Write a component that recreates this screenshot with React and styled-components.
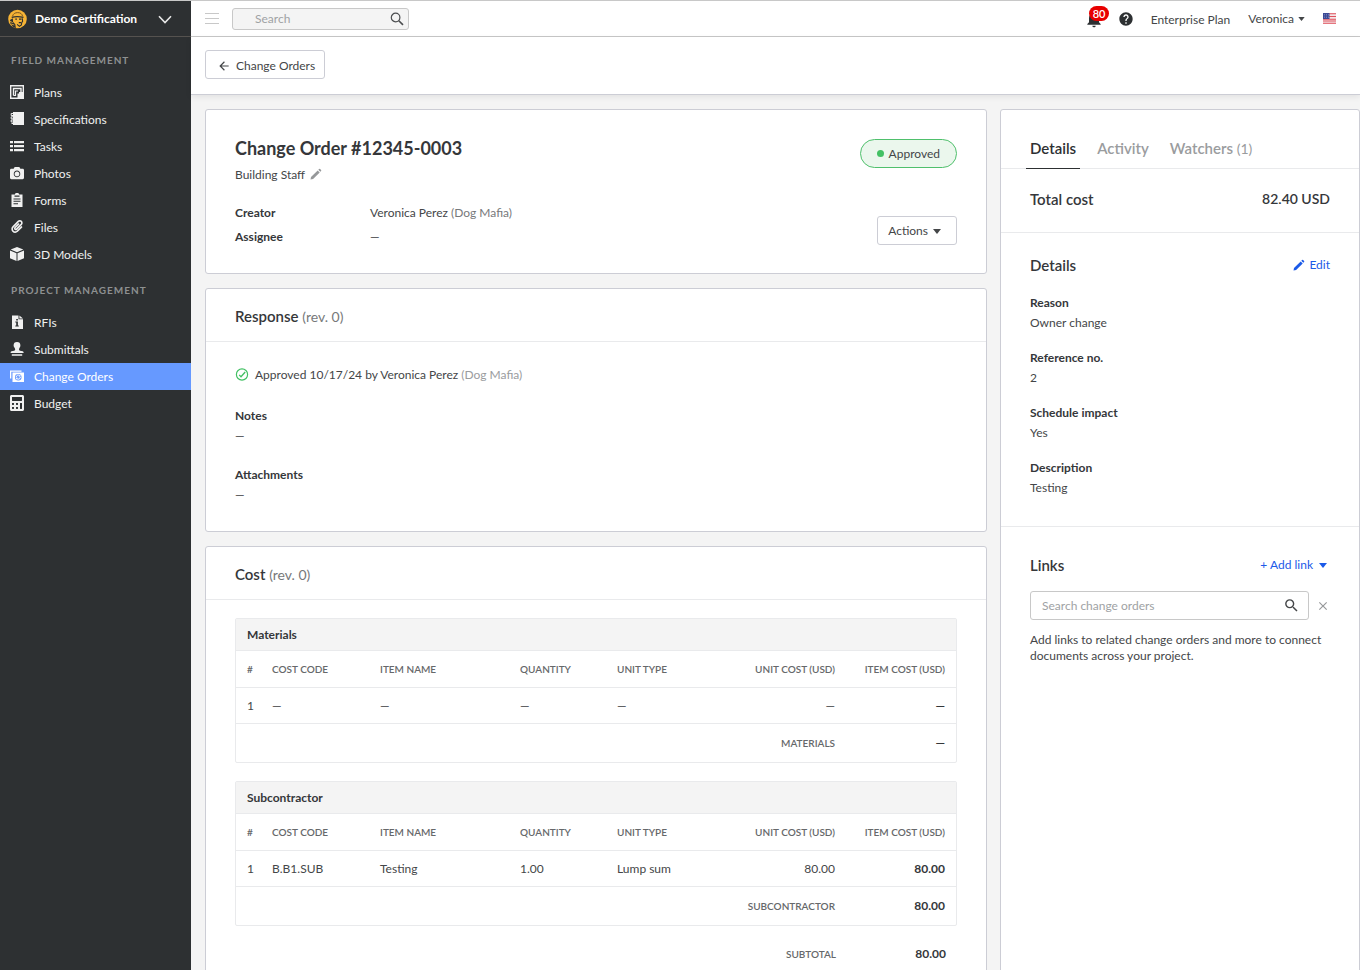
import React from "react";
import styled, { createGlobalStyle } from "styled-components";
import { MdArrowBack, MdClose, MdHelp, MdNotifications, MdSearch } from "react-icons/md";
import { FaCalculator, FaCamera, FaPaperclip } from "react-icons/fa";

const Global = createGlobalStyle`
  *, *::before, *::after { box-sizing: border-box; }
  body {
    margin: 0;
    font-family: Lato, "Liberation Sans", sans-serif;
    font-size: 12px;
    line-height: 20px;
    color: #444648;
    background: #f4f4f4;
  }
  button, input { font: inherit; color: inherit; }
  button { cursor: pointer; }
  h1, h2, h3, p, dl, dd, ul { margin: 0; padding: 0; }
  svg { display: block; flex: none; }
`;

const Shell = styled.div`
  display: flex;
  height: 100vh;
  overflow: hidden;
`;

const Sidebar = styled.nav`
  flex: none;
  width: 191px;
  background: #2d3032;
  color: #f0f0f0;
  overflow: hidden;
`;

const ProjectSwitch = styled.button`
  display: flex;
  align-items: center;
  width: 100%;
  height: 37px;
  margin-bottom: 1px;
  padding: 1px 19px 0 8px;
  gap: 8px;
  border: 0;
  border-top: 1px solid #c8c8c8;
  border-bottom: 1px solid #55524f;
  background: none;
  color: #fff;
  font-weight: 700;
  text-align: left;
`;

const ProjectName = styled.span`
  flex: 1;
`;

const NavHeading = styled.h2`
  height: 41px;
  padding: 12px 11px 0;
  font-size: 10px;
  font-weight: 700;
  letter-spacing: 1px;
  color: #8e9091;
`;

const NavList = styled.ul`
  list-style: none;
`;

const NavLink = styled.a`
  display: flex;
  align-items: center;
  gap: 10px;
  height: 27px;
  padding: 0 10px;
  color: ${(p) => (p.$active ? "#fff" : "#f0f0f0")};
  background: ${(p) => (p.$active ? "#6699ff" : "transparent")};
  text-decoration: none;

  svg {
    width: 14px;
    margin-bottom: 2px;
  }
`;

const Main = styled.div`
  flex: 1;
  min-width: 0;
  display: flex;
  flex-direction: column;
`;

const TopBar = styled.header`
  flex: none;
  display: flex;
  align-items: center;
  height: 37px;
  padding: 0 24px 0 14px;
  border-top: 1px solid #c8c8c8;
  border-bottom: 1px solid #c8c8c8;
  background: #fff;
`;

const IconButton = styled.button`
  display: flex;
  align-items: center;
  padding: 0;
  border: 0;
  background: none;
  color: ${(p) => p.$color || "#2d3032"};
`;

const SearchBox = styled.label`
  display: flex;
  align-items: center;
  border: 1px solid #c8c8c8;
  border-radius: 3px;
`;

const TopSearch = styled(SearchBox)`
  width: 177px;
  height: 22px;
  margin-left: 13px;
  padding: 0 4px 0 22px;
  background: #f4f4f4;
`;

const LinkSearch = styled(SearchBox)`
  flex: 1;
  min-width: 0;
  height: 29px;
  padding: 0 8px 0 11px;
`;

const SearchInput = styled.input`
  flex: 1;
  min-width: 0;
  padding: 0;
  border: 0;
  outline: 0;
  background: none;
  &::placeholder { color: #a0a2a4; opacity: 1; }
`;

const TopActions = styled.div`
  display: flex;
  align-items: center;
  margin-left: auto;
`;

const Notifications = styled(IconButton)`
  position: relative;
  margin-right: 14px;
`;

const Count = styled.span`
  position: absolute;
  left: 5px;
  top: -3px;
  height: 15px;
  padding: 0 4px;
  border-radius: 8px;
  background: #e80000;
  color: #fff;
  font-size: 11px;
  font-weight: 600;
  line-height: 15px;
`;

const PlanLink = styled.a`
  margin: 2px 18px 0 17px;
  color: inherit;
  text-decoration: none;
`;

const UserMenu = styled.button`
  display: flex;
  align-items: center;
  gap: 4px;
  margin-right: 18px;
  padding: 0;
  border: 0;
  background: none;
`;

const SubBar = styled.div`
  flex: none;
  position: relative;
  padding: 13px 14px 15px;
  border-bottom: 1px solid #cccdd5;
  background: #fff;
  box-shadow: 0 2px 6px rgba(0, 0, 0, 0.08);
`;

const OutlineButton = styled.button`
  display: inline-flex;
  align-items: center;
  height: 29px;
  padding: ${(p) => p.$pad};
  gap: 5px;
  border: 1px solid #cccdd5;
  border-radius: 3px;
  background: #fff;
  vertical-align: top;
`;

const Content = styled.main`
  flex: 1;
  min-height: 0;
  overflow-y: auto;
  scrollbar-width: none;
`;

const ContentRow = styled.div`
  display: flex;
  align-items: stretch;
  gap: 13px;
  min-height: 100%;
  padding: 14px 0 14px 14px;
`;

const Column = styled.div`
  flex: 1;
  min-width: 0;
  display: flex;
  flex-direction: column;
  gap: 14px;
`;

const Card = styled.section`
  border: 1px solid #cccdd5;
  border-radius: 3px;
  background: #fff;
`;

const SummaryCard = styled(Card)`
  display: flex;
  justify-content: space-between;
  padding: 26px 29px 24px;
`;

const Title = styled.h1`
  font-size: 18px;
  line-height: 24px;
  font-weight: 700;
  color: #35373a;
`;

const Subtitle = styled.p`
  display: flex;
  align-items: center;
  gap: 4px;
  margin: 5px 0 16px;

  svg { margin-bottom: 2px; }
`;

const People = styled.dl`
  display: grid;
  grid-template-columns: 135px auto;
  line-height: 24px;
`;

const Term = styled.dt`
  font-weight: 700;
  color: #35373a;
`;

const Muted = styled.span`
  color: ${(p) => (p.$light ? "#9a9c9e" : "#77797b")};
  font-weight: 400;
`;

const Revision = styled(Muted)`
  font-size: 14px;
`;

const SummarySide = styled.div`
  display: flex;
  flex-direction: column;
  align-items: flex-end;
  gap: 48px;
  padding-top: 3px;
`;

const Badge = styled.span`
  display: flex;
  align-items: center;
  gap: 5px;
  height: 29px;
  padding: 0 16px;
  border: 1px solid #4fc06c;
  border-radius: 15px;
  background: #ebf7ed;
`;

const Dot = styled.span`
  width: 7px;
  height: 7px;
  border-radius: 50%;
  background: #43c164;
`;

const CardHeader = styled.header`
  display: flex;
  align-items: center;
  height: 53px;
  padding: 2px 29px 0;
  border-bottom: 1px solid #e9eaec;
`;

const Heading = styled.h2`
  font-size: 15px;
  line-height: 20px;
  font-weight: 600;
  color: #35373a;
`;

const ResponseBody = styled.div`
  padding: 23px 29px 26px;
`;

const Approval = styled.p`
  display: flex;
  align-items: center;
  gap: 6px;
  margin-bottom: 21px;
`;

const FieldList = styled.dl`
  display: flex;
  flex-direction: column;
  gap: ${(p) => p.$gap}px;
`;

const CostBody = styled.div`
  display: flex;
  flex-direction: column;
  gap: 18px;
  padding: 18px 29px 29px;
`;

const TableFrame = styled.div`
  border: 1px solid #e9eaec;
  border-radius: 2px;
`;

const Table = styled.table`
  width: 100%;
  table-layout: fixed;
  border-collapse: separate;
  border-spacing: 0;
`;

const Caption = styled.caption`
  height: 32px;
  padding: 6px 11px 5px;
  border-bottom: 1px solid #e9eaec;
  background: #f4f4f4;
  color: #35373a;
  font-weight: 700;
  text-align: left;
`;

const Col = styled.col`
  width: ${(p) => p.$w}px;
`;

const HeadCell = styled.th`
  height: 37px;
  padding: 0 11px;
  border-bottom: 1px solid #e9eaec;
  font-size: 10px;
  font-weight: 600;
  color: #66686a;
  text-align: ${(p) => (p.$right ? "right" : "left")};
  white-space: nowrap;
`;

const Cell = styled.td`
  height: 36px;
  padding: 0 11px;
  border-bottom: 1px solid #e9eaec;
  text-align: ${(p) => (p.$right ? "right" : "left")};
  font-weight: ${(p) => (p.$bold ? 700 : 400)};
  color: ${(p) => (p.$bold ? "#35373a" : "inherit")};
`;

const FootLabel = styled(HeadCell)`
  height: 38px;
  border: 0;
`;

const FootCell = styled(Cell)`
  height: 38px;
  border: 0;
`;

const Totals = styled.dl`
  display: grid;
  grid-template-columns: 1fr 110px;
  padding-right: 11px;
  text-align: right;
`;

const TotalLabel = styled.dt`
  font-size: 10px;
  font-weight: 600;
  color: #66686a;
`;

const TotalValue = styled.dd`
  font-weight: 700;
  color: #35373a;
`;

const Panel = styled.aside`
  flex: none;
  width: 360px;
  border: 1px solid #cccdd5;
  border-radius: 3px;
  background: #fff;
`;

const Tabs = styled.div`
  display: flex;
  gap: 13px;
  height: 59px;
  padding: 18px 25px 0;
  border-bottom: 1px solid #e9eaec;
`;

const Tab = styled.button`
  height: 41px;
  padding: 0 4px;
  border: 0;
  border-bottom: 1px solid ${(p) => (p.$active ? "#2d3032" : "transparent")};
  background: none;
  font-size: 15px;
  font-weight: 600;
  color: ${(p) => (p.$active ? "#2d3032" : "#9a9c9e")};
`;

const TabCount = styled.span`
  font-size: 14px;
  font-weight: 400;
`;

const PanelSection = styled.section`
  padding: ${(p) => p.$pad};
  border-bottom: ${(p) => (p.$last ? "0" : "1px solid #e9eaec")};
`;

const PanelRow = styled.div`
  display: flex;
  align-items: center;
  justify-content: space-between;
  margin-bottom: ${(p) => p.$mb || 0}px;
`;

const TotalAmount = styled.strong`
  font-size: 14px;
  font-weight: 600;
  color: #35373a;
`;

const TextButton = styled.button`
  display: flex;
  align-items: center;
  gap: ${(p) => p.$gap}px;
  padding: 0 ${(p) => p.$end || 0}px 0 0;
  border: 0;
  background: none;
  color: #1b5ae8;
`;

const LinkRow = styled.div`
  display: flex;
  align-items: center;
  gap: 7px;
  margin-bottom: 12px;
`;

const Hint = styled.p`
  line-height: 16px;
`;

const Caret = ({ w = 8, h = 5 }) => (
  <svg width={w} height={h} viewBox="0 0 8 5" fill="currentColor" aria-hidden="true">
    <path d="M0 0h8L4 5z" />
  </svg>
);

const Icon14 = ({ children, size = 14 }) => (
  <svg width={size} height={size} viewBox="0 0 14 14" fill="currentColor" aria-hidden="true">
    {children}
  </svg>
);

const PlansIcon = () => (
  <Icon14>
    <path d="M.7 .7h12.600v12.600H.7z" fill="none" stroke="currentColor" strokeWidth="1.400" />
    <path d="M3.500 10.500V3.500h7.500v3.500" fill="none" stroke="currentColor" strokeWidth="1.400" />
    <path d="M3.500 10.500h2V6h2.500" fill="none" stroke="currentColor" strokeWidth="1.200" />
    <path d="M7.500 8.500H9V7h4v6H7.500z" />
  </Icon14>
);

const SpecsIcon = () => (
  <Icon14>
    <path d="M3 0h11v13H3z" />
    <path d="M4 1.500H1.200v2H4M4 4.800H1.200v2H4M4 8H1.200v2H4M4 11.500H1.500" fill="none" stroke="currentColor" strokeWidth="1" />
  </Icon14>
);

const TasksIcon = () => (
  <Icon14>
    <path d="M0 2h3v2.200H0zM4 2h10v2.200H4zM0 6h3v2.200H0zM4 6h10v2.200H4zM0 10h3v2.200H0zM4 10h10v2.200H4z" />
  </Icon14>
);

const FormsIcon = () => (
  <Icon14>
    <path fillRule="evenodd" d="M1.500 1.500H5V.8L6 0h2l1 .8v.7h3.500V14h-11zM4.500 2.500v1.200h5V2.500zM3.500 5.400v1h7v-1zm0 2.400v1h7v-1zm0 2.400v1H8v-1z" />
  </Icon14>
);

const CubeIcon = () => (
  <Icon14>
    <path d="M7 0l6.300 2.600L7 5.200.7 2.600zM0 3.500l6.500 2.700V14L0 11.200zM14 3.500L7.500 6.200V14l6.500-2.800z" />
  </Icon14>
);

const RfiIcon = () => (
  <Icon14>
    <path fillRule="evenodd" d="M2 .5h6.500V4.200H13V14H2zM9.400 .5l3.600 2.900H9.400zM6.200 4v1.500h1.700V4zM5.300 6.500v1h.9v3h-.9v1h3.500v-1H7.900v-4z" />
  </Icon14>
);

const StampIcon = () => (
  <Icon14>
    <path d="M7 0a3.400 3.400 0 0 1 3.400 3.400c0 1.800-1.400 2.300-1.400 4.100 0 .7.400 1.100 1 1.200l2.700.5q.9.300.9 1.300v.6H.6v-.6q0-1 .9-1.300l2.700-.5c.6-.1 1-.5 1-1.200 0-1.800-1.600-2.300-1.600-4.100A3.400 3.400 0 0 1 7 0zM1.800 12.200h10.400V13.800H1.800z" />
  </Icon14>
);

const OrdersIcon = () => (
  <Icon14>
    <path d="M0 1.500h11.500v1.200H1.300V9.500H0z" />
    <path fillRule="evenodd" d="M2.500 3.500H14V13H2.500zM8.200 4.900a3.300 3.300 0 1 0 .1 6.600 3.300 3.300 0 0 0-.1-6.600z" />
    <path d="M6.200 8.300A2 2 0 0 1 9.600 6.700M10.300 8A2 2 0 0 1 6.900 9.600" fill="none" stroke="currentColor" strokeWidth="1" />
    <path d="M10.400 5.600v2H8.500zM6.100 10.700v-2H8z" />
  </Icon14>
);

const HardHatLogo = () => (
  <svg width="19" height="20" viewBox="0 0 19 20" aria-hidden="true">
    <circle cx="9.500" cy="10" r="9.300" fill="#f5b335" />
    <path d="M4.600 7.200C5 4.900 6.900 3.600 9.700 3.600s4.500 1.400 4.800 3.600" fill="none" stroke="#7a5722" strokeWidth="1" />
    <path d="M3.700 8.300q5.500-1.500 11.800.1" stroke="#2d3032" strokeWidth="1.300" fill="none" />
    <path d="M4.800 9.300l.3 3.600 2.200 2.300.6 4-2.400-.9-2.900-3.200L2 11z" fill="#2d3032" />
    <path d="M2 12.200l2.800 1.500M3 15l3.300 1" stroke="#f5b335" strokeWidth=".8" />
    <path d="M7.300 10.200h1.600M11 10.200h2.500M10.800 13.600h2.200" stroke="#2d3032" strokeWidth="1.200" />
    <path d="M14.300 9.300l.3 3-.9 1.300-.3 2.400-2 1.300-2.300-2" stroke="#2d3032" strokeWidth="1.100" fill="none" />
  </svg>
);

const ChevronDown = () => (
  <svg width="14" height="9" viewBox="0 0 14 9" aria-hidden="true">
    <path d="M1 1.200l6 6.300 6-6.300" fill="none" stroke="#e8e8e8" strokeWidth="1.600" />
  </svg>
);

const MenuLines = () => (
  <svg width="14" height="11" viewBox="0 0 14 11" aria-hidden="true">
    <path d="M0 .5h14M0 5.500h14M0 10.500h14" stroke="#c8c8c8" />
  </svg>
);

const ThinSearch = () => (
  <svg width="14" height="14" viewBox="0 0 14 14" fill="none" stroke="#4b4d4f" aria-hidden="true">
    <circle cx="5.600" cy="5.500" r="4.300" strokeWidth="1.200" />
    <path d="M8.800 8.700l4.200 4.200" strokeWidth="1.600" />
  </svg>
);

const Pencil = ({ size = 13 }) => (
  <svg width={size} height={size} viewBox="0 0 13 13" fill="currentColor" aria-hidden="true">
    <path d="M1.500 11.500l.5-2.600 6.700-6.500 2 2L4.100 11zM9.300 1.800l.8-.8q.5-.4 1 0l1 1q.4.500 0 1l-.8.8z" />
  </svg>
);

const Flag = () => (
  <svg width="13" height="11" viewBox="0 0 13 11" role="img" aria-label="United States">
    <path fill="#f4e6e8" d="M0 0h13v11H0z" />
    <path d="M0 .7h13M0 3.500h13M0 6.200h13M0 8h13M0 10.300h13" stroke="#e0525c" strokeWidth="1.100" />
    <path fill="#3c4a96" d="M0 0h6.500v6H0z" />
    <path d="M1 1.500h5M1 3h5M1 4.500h5" stroke="#8f98c8" strokeWidth=".6" strokeDasharray="1 1" />
  </svg>
);

const CheckCircle = () => (
  <svg width="14" height="14" viewBox="0 0 14 14" fill="none" stroke="#43c164" aria-hidden="true">
    <circle cx="7" cy="6.500" r="5.600" strokeWidth="1.200" />
    <path d="M4.200 6.900l1.800 1.900 4.200-4.800" strokeWidth="1.300" />
  </svg>
);

const fieldLinks = [
  ["Plans", PlansIcon],
  ["Specifications", SpecsIcon],
  ["Tasks", TasksIcon],
  ["Photos", () => <FaCamera size={14} />],
  ["Forms", FormsIcon],
  ["Files", () => <FaPaperclip size={13} />],
  ["3D Models", CubeIcon],
];

const projectLinks = [
  ["RFIs", RfiIcon],
  ["Submittals", StampIcon],
  ["Change Orders", OrdersIcon],
  ["Budget", () => <FaCalculator size={16} />],
];

const NavGroup = ({ title, links, active }) => (
  <>
    <NavHeading>{title}</NavHeading>
    <NavList>
      {links.map(([label, Icon]) => (
        <li key={label}>
          <NavLink href="#" $active={label === active}>
            <Icon />
            {label}
          </NavLink>
        </li>
      ))}
    </NavList>
  </>
);

const colWidths = [25, 108, 140, 97, 97, 143, 110];
const colNames = ["#", "COST CODE", "ITEM NAME", "QUANTITY", "UNIT TYPE", "UNIT COST (USD)", "ITEM COST (USD)"];

const CostTable = ({ title, row, total }) => (
  <TableFrame>
    <Table>
      <Caption>{title}</Caption>
      <colgroup>
        {colWidths.map((w, i) => (
          <Col key={i} $w={w} />
        ))}
      </colgroup>
      <thead>
        <tr>
          {colNames.map((name, i) => (
            <HeadCell key={name} scope="col" $right={i > 4}>{name}</HeadCell>
          ))}
        </tr>
      </thead>
      <tbody>
        <tr>
          {row.map((value, i) => (
            <Cell key={i} $right={i > 4} $bold={i === 6}>{value}</Cell>
          ))}
        </tr>
      </tbody>
      <tfoot>
        <tr>
          <FootLabel scope="row" colSpan={6} $right>{title.toUpperCase()}</FootLabel>
          <FootCell $right $bold>{total}</FootCell>
        </tr>
      </tfoot>
    </Table>
  </TableFrame>
);

const Field = ({ label, value }) => (
  <div>
    <Term>{label}</Term>
    <dd>{value}</dd>
  </div>
);

export default function App() {
  return (
    <>
      <Global />
      <Shell>
        <Sidebar>
          <ProjectSwitch>
            <HardHatLogo />
            <ProjectName>Demo Certification</ProjectName>
            <ChevronDown />
          </ProjectSwitch>
          <NavGroup title="FIELD MANAGEMENT" links={fieldLinks} />
          <NavGroup title="PROJECT MANAGEMENT" links={projectLinks} active="Change Orders" />
        </Sidebar>
        <Main>
          <TopBar>
            <IconButton aria-label="Toggle menu"><MenuLines /></IconButton>
            <TopSearch>
              <SearchInput type="text" placeholder="Search" aria-label="Search" />
              <ThinSearch />
            </TopSearch>
            <TopActions>
              <Notifications aria-label="Notifications">
                <MdNotifications size={20} />
                <Count>80</Count>
              </Notifications>
              <IconButton aria-label="Help"><MdHelp size={16} /></IconButton>
              <PlanLink href="#">Enterprise Plan</PlanLink>
              <UserMenu>Veronica <Caret w={7} h={4} /></UserMenu>
              <Flag />
            </TopActions>
          </TopBar>
          <SubBar>
            <OutlineButton $pad="2px 9px 0 11px"><MdArrowBack size={14} />Change Orders</OutlineButton>
          </SubBar>
          <Content>
            <ContentRow>
              <Column>
                <SummaryCard>
                  <div>
                    <Title>Change Order #12345-0003</Title>
                    <Subtitle>
                      Building Staff
                      <IconButton aria-label="Edit title" $color="#96989a"><Pencil /></IconButton>
                    </Subtitle>
                    <People>
                      <Term>Creator</Term>
                      <dd>Veronica Perez <Muted>(Dog Mafia)</Muted></dd>
                      <Term>Assignee</Term>
                      <dd>—</dd>
                    </People>
                  </div>
                  <SummarySide>
                    <Badge><Dot />Approved</Badge>
                    <OutlineButton $pad="1px 15px 0 10px">Actions <Caret /></OutlineButton>
                  </SummarySide>
                </SummaryCard>
                <Card>
                  <CardHeader>
                    <Heading>Response <Revision>(rev. 0)</Revision></Heading>
                  </CardHeader>
                  <ResponseBody>
                    <Approval>
                      <CheckCircle />
                      <span>Approved 10/17/24 by Veronica Perez <Muted $light>(Dog Mafia)</Muted></span>
                    </Approval>
                    <FieldList $gap={19}>
                      <Field label="Notes" value="—" />
                      <Field label="Attachments" value="—" />
                    </FieldList>
                  </ResponseBody>
                </Card>
                <Card>
                  <CardHeader>
                    <Heading>Cost <Revision>(rev. 0)</Revision></Heading>
                  </CardHeader>
                  <CostBody>
                    <CostTable title="Materials" row={["1", "—", "—", "—", "—", "—", "—"]} total="—" />
                    <CostTable
                      title="Subcontractor"
                      row={["1", "B.B1.SUB", "Testing", "1.00", "Lump sum", "80.00", "80.00"]}
                      total="80.00"
                    />
                    <Totals>
                      <TotalLabel>SUBTOTAL</TotalLabel>
                      <TotalValue>80.00</TotalValue>
                    </Totals>
                  </CostBody>
                </Card>
              </Column>
              <Panel>
                <Tabs role="tablist">
                  <Tab role="tab" aria-selected="true" $active>Details</Tab>
                  <Tab role="tab" aria-selected="false">Activity</Tab>
                  <Tab role="tab" aria-selected="false">Watchers <TabCount>(1)</TabCount></Tab>
                </Tabs>
                <PanelSection $pad="20px 29px 23px">
                  <PanelRow>
                    <Heading>Total cost</Heading>
                    <TotalAmount>82.40 USD</TotalAmount>
                  </PanelRow>
                </PanelSection>
                <PanelSection $pad="22px 29px 28px">
                  <PanelRow $mb={18}>
                    <Heading>Details</Heading>
                    <TextButton $gap={4}><Pencil />Edit</TextButton>
                  </PanelRow>
                  <FieldList $gap={15}>
                    <Field label="Reason" value="Owner change" />
                    <Field label="Reference no." value="2" />
                    <Field label="Schedule impact" value="Yes" />
                    <Field label="Description" value="Testing" />
                  </FieldList>
                </PanelSection>
                <PanelSection $pad="28px 29px" $last>
                  <PanelRow $mb={16}>
                    <Heading>Links</Heading>
                    <TextButton $gap={6} $end={3}>+ Add link <Caret /></TextButton>
                  </PanelRow>
                  <LinkRow>
                    <LinkSearch>
                      <SearchInput type="text" placeholder="Search change orders" aria-label="Search change orders" />
                      <MdSearch size={17} />
                    </LinkSearch>
                    <IconButton aria-label="Clear" $color="#96989a"><MdClose size={14} /></IconButton>
                  </LinkRow>
                  <Hint>Add links to related change orders and more to connect documents across your project.</Hint>
                </PanelSection>
              </Panel>
            </ContentRow>
          </Content>
        </Main>
      </Shell>
    </>
  );
}
